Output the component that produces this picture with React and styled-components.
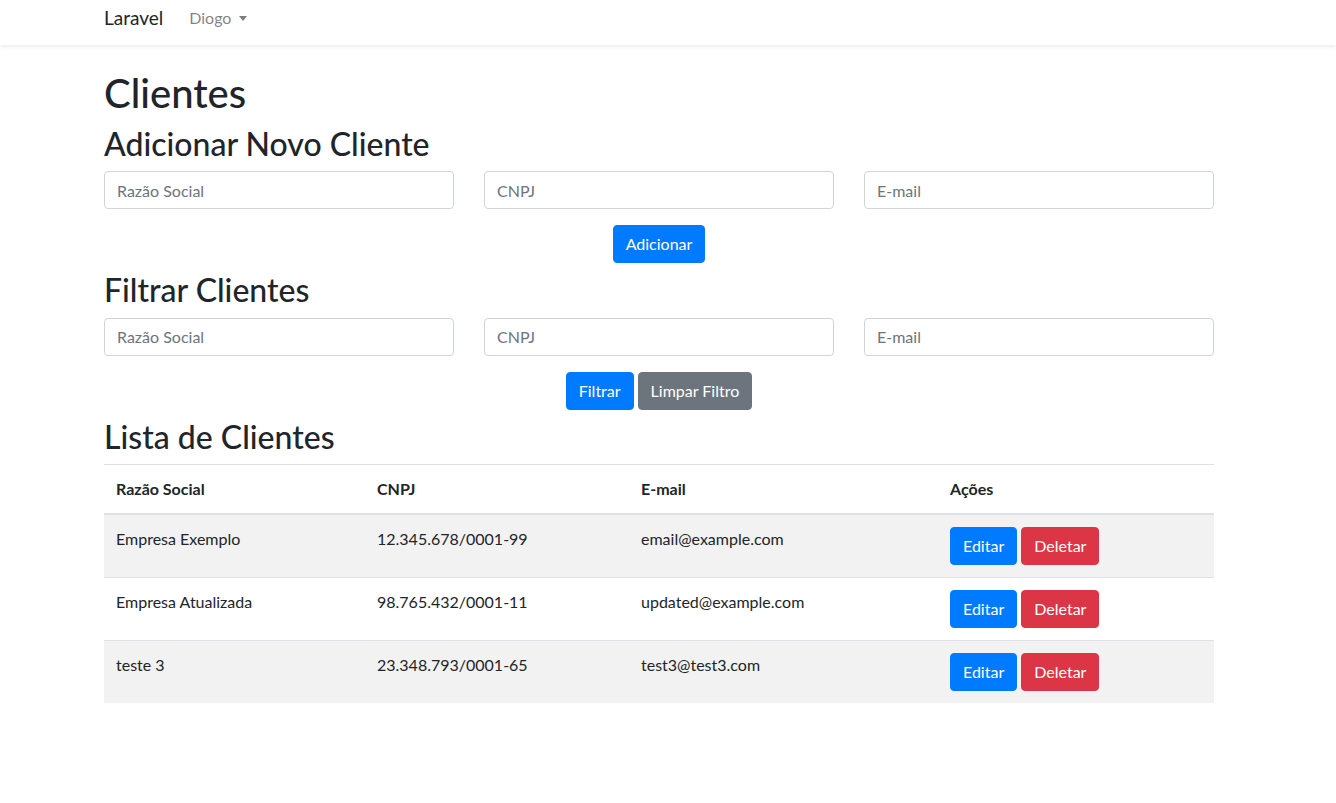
import React from "react";
import styled, { createGlobalStyle } from "styled-components";

const Global = createGlobalStyle`
  * { box-sizing: border-box; }
  html, body { margin: 0; padding: 0; background: #fff; }
  body {
    font-family: Lato, "Open Sans", sans-serif;
    font-size: 16px;
    line-height: 1.5;
    color: #212529;
  }
`;

const Navbar = styled.nav`
  height: 45px;
  background: #fff;
  box-shadow: 0 2px 4px rgba(0, 0, 0, 0.075);
`;

const Container = styled.div`
  width: 1110px;
  margin-left: calc(50% - 564px);
`;

const NavInner = styled(Container)`
  display: flex;
  align-items: center;
  height: 100%;
  padding-bottom: 9px;
`;

const Brand = styled.a`
  font-size: 19px;
  color: #212529;
  text-decoration: none;
  margin-right: 26px;
`;

const NavLink = styled.a`
  display: flex;
  align-items: center;
  font-size: 16px;
  color: rgba(0, 0, 0, 0.5);
  text-decoration: none;
  &::after {
    content: "";
    margin-left: 8px;
    border-top: 5px solid rgba(0, 0, 0, 0.5);
    border-left: 4px solid transparent;
    border-right: 4px solid transparent;
  }
`;

const Main = styled(Container)`
  padding-top: 24px;
`;

const H1 = styled.h1`
  font-size: 40px;
  font-weight: 500;
  line-height: 1.2;
  margin: 0 0 8px;
`;

const H2 = styled.h2`
  font-size: 32px;
  font-weight: 500;
  line-height: 1.2;
  margin: ${(p) => p.$top || 0}px 0 8px;
`;

const Row = styled.div`
  display: grid;
  grid-template-columns: repeat(3, 1fr);
  column-gap: 30px;
  margin-bottom: 16px;
`;

const Input = styled.input`
  display: block;
  width: 100%;
  height: 38px;
  padding: 6px 12px;
  font-family: inherit;
  font-size: 16px;
  color: #495057;
  background: #fff;
  border: 1px solid #ced4da;
  border-radius: 4px;
  outline: none;
  &::placeholder { color: #6c757d; opacity: 1; }
`;

const Actions = styled.div`
  display: flex;
  justify-content: center;
  gap: 4px;
`;

const colors = {
  primary: "#007bff",
  secondary: "#6c757d",
  danger: "#dc3545",
};

const Button = styled.button`
  height: 38px;
  padding: 6px 12px;
  font-family: inherit;
  font-size: 16px;
  line-height: 1.5;
  color: #fff;
  background: ${(p) => colors[p.$variant || "primary"]};
  border: 1px solid ${(p) => colors[p.$variant || "primary"]};
  border-radius: 4px;
  cursor: pointer;
`;

const Table = styled.table`
  width: 100%;
  border-collapse: collapse;
  margin-top: 4px;
`;

const Th = styled.th`
  text-align: left;
  font-weight: 700;
  padding: 12px;
  border-top: 1px solid #dee2e6;
  border-bottom: 2px solid #dee2e6;
  vertical-align: bottom;
  width: ${(p) => p.$w}px;
`;

const Tr = styled.tr`
  background: ${(p) => (p.$odd ? "rgba(0,0,0,0.05)" : "transparent")};
`;

const Td = styled.td`
  padding: 12px;
  border-top: 1px solid #dee2e6;
  vertical-align: top;
`;

const CellButtons = styled.div`
  display: flex;
  gap: 4px;
`;

const clientes = [
  ["Empresa Exemplo", "12.345.678/0001-99", "email@example.com"],
  ["Empresa Atualizada", "98.765.432/0001-11", "updated@example.com"],
  ["teste 3", "23.348.793/0001-65", "test3@test3.com"],
];

export default function App() {
  return (
    <>
      <Global />
      <Navbar>
        <NavInner>
          <Brand href="#">Laravel</Brand>
          <NavLink href="#">Diogo</NavLink>
        </NavInner>
      </Navbar>
      <Main>
        <H1>Clientes</H1>
        <H2>Adicionar Novo Cliente</H2>
        <Row>
          <Input placeholder="Razão Social" />
          <Input placeholder="CNPJ" />
          <Input placeholder="E-mail" />
        </Row>
        <Actions>
          <Button>Adicionar</Button>
        </Actions>
        <H2 $top={8}>Filtrar Clientes</H2>
        <Row>
          <Input placeholder="Razão Social" />
          <Input placeholder="CNPJ" />
          <Input placeholder="E-mail" />
        </Row>
        <Actions>
          <Button>Filtrar</Button>
          <Button $variant="secondary">Limpar Filtro</Button>
        </Actions>
        <H2 $top={8}>Lista de Clientes</H2>
        <Table>
          <thead>
            <tr>
              <Th $w={261}>Razão Social</Th>
              <Th $w={264}>CNPJ</Th>
              <Th $w={309}>E-mail</Th>
              <Th $w={276}>Ações</Th>
            </tr>
          </thead>
          <tbody>
            {clientes.map((c, i) => (
              <Tr key={i} $odd={i % 2 === 0}>
                <Td>{c[0]}</Td>
                <Td>{c[1]}</Td>
                <Td>{c[2]}</Td>
                <Td>
                  <CellButtons>
                    <Button>Editar</Button>
                    <Button $variant="danger">Deletar</Button>
                  </CellButtons>
                </Td>
              </Tr>
            ))}
          </tbody>
        </Table>
      </Main>
    </>
  );
}
